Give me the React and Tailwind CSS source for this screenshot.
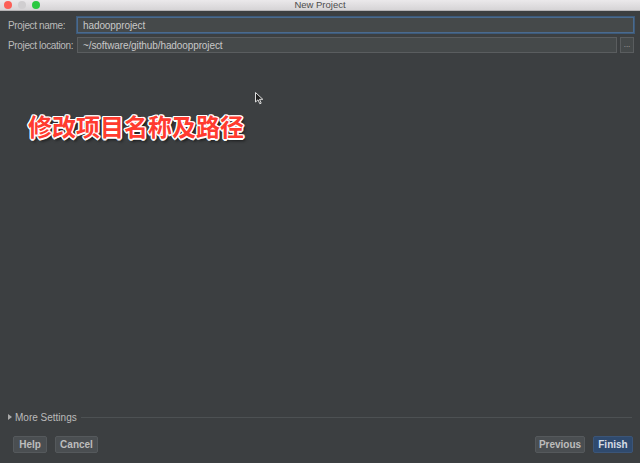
import React from 'react';

const font = { fontFamily: '"Liberation Sans", "DejaVu Sans", sans-serif' };

const Field = ({ label, value, focused, browse }) => (
    <div className="flex items-center h-[16px] pl-[8px] pr-[6px]">
        <span className="w-[69px] text-[10px] tracking-[-0.35px] text-[#bbbbbb] whitespace-nowrap">{label}</span>
        <div
            className={`flex-1 h-full flex items-center px-[5px] text-[10px] tracking-[-0.1px] text-[#c8c8c8] bg-[#45494a] border ${
                focused ? 'border-[#4a6a8e] shadow-[0_0_0_1px_#3d5a7a]' : 'border-[#5a5d5f]'
            }`}
        >
            {value}
        </div>
        {browse && (
            <div className="ml-[3px] w-[14px] h-full flex items-center justify-center bg-[#45494a] border border-[#5a5d5f] text-[8px] leading-none text-[#aaaaaa]">
                ...
            </div>
        )}
    </div>
);

const Btn = ({ children, primary, w }) => (
    <div
        className={`h-[17px] ${w} flex items-center justify-center rounded-[2px] text-[10px] font-bold border ${
            primary
                ? 'bg-[#2f4a6e] border-[#3b5578] text-[#d6dde6]'
                : 'bg-[#4a4e51] border-[#55595c] text-[#bdbdbd]'
        }`}
    >
        {children}
    </div>
);

const App = () => {
    return (
        <div className="w-[640px] h-[463px] flex flex-col overflow-hidden" style={font}>
            {/* title bar */}
            <div className="relative h-[11px] flex items-center bg-gradient-to-b from-[#ebe9eb] to-[#d6d4d6] border-b border-[#b5b3b5]">
                <div className="flex gap-[6px] pl-[4px]">
                    <span className="w-[8px] h-[8px] rounded-full bg-[#fc5f57]" />
                    <span className="w-[8px] h-[8px] rounded-full bg-[#d0ced0]" />
                    <span className="w-[8px] h-[8px] rounded-full bg-[#2ac840]" />
                </div>
                <span className="absolute inset-0 flex items-center justify-center text-[9.5px] text-[#4d4d4d]">
                    New Project
                </span>
            </div>

            <div className="relative flex-1 flex flex-col bg-[#3c3f41]">
                <div className="flex flex-col gap-[4px] pt-[6px]">
                    <Field label="Project name:" value="hadoopproject" focused />
                    <Field label="Project location:" value="~/software/github/hadoopproject" browse />
                </div>

                <div className="flex-1 pt-[55px] pl-[28px]">
                    <span
                        className="text-[24px] font-bold text-[#ff3b2f]"
                        style={{
                            fontFamily: '"Noto Sans CJK SC", sans-serif',
                            textShadow:
                                '1.5px 0 #fff, -1.5px 0 #fff, 0 1.5px #fff, 0 -1.5px #fff, 1px 1px #fff, -1px -1px #fff, 1px -1px #fff, -1px 1px #fff, 2px 3px 3px rgba(0,0,0,0.6)',
                        }}
                    >
                        修改项目名称及路径
                    </span>
                </div>

                {/* mouse cursor */}
                <svg className="absolute left-[255px] top-[81px]" width="9" height="13" viewBox="0 0 9 13">
                    <path d="M0.5 0.5 L0.5 10 L3 7.8 L4.8 11.8 L6.2 11.2 L4.5 7.3 L7.8 7.3 Z" fill="#222" stroke="#ddd" strokeWidth="1" />
                </svg>

                <div className="flex items-center h-[12px] pl-[8px] pr-[8px]">
                    <span className="w-0 h-0 border-y-[3px] border-y-transparent border-l-[4px] border-l-[#aaaaaa] mr-[3px]" />
                    <span className="text-[10px] text-[#bbbbbb] whitespace-nowrap">More Settings</span>
                    <div className="flex-1 ml-[4px] h-px bg-[#4d5153]" />
                </div>

                <div className="flex items-center justify-between h-[17px] mt-[13px] mb-[10px] pl-[13px] pr-[7px]">
                    <div className="flex gap-[8px]">
                        <Btn w="w-[34px]">Help</Btn>
                        <Btn w="w-[43px]">Cancel</Btn>
                    </div>
                    <div className="flex gap-[8px]">
                        <Btn w="w-[50px]">Previous</Btn>
                        <Btn w="w-[40px]" primary>Finish</Btn>
                    </div>
                </div>
            </div>
        </div>
    );
};

export default App;
